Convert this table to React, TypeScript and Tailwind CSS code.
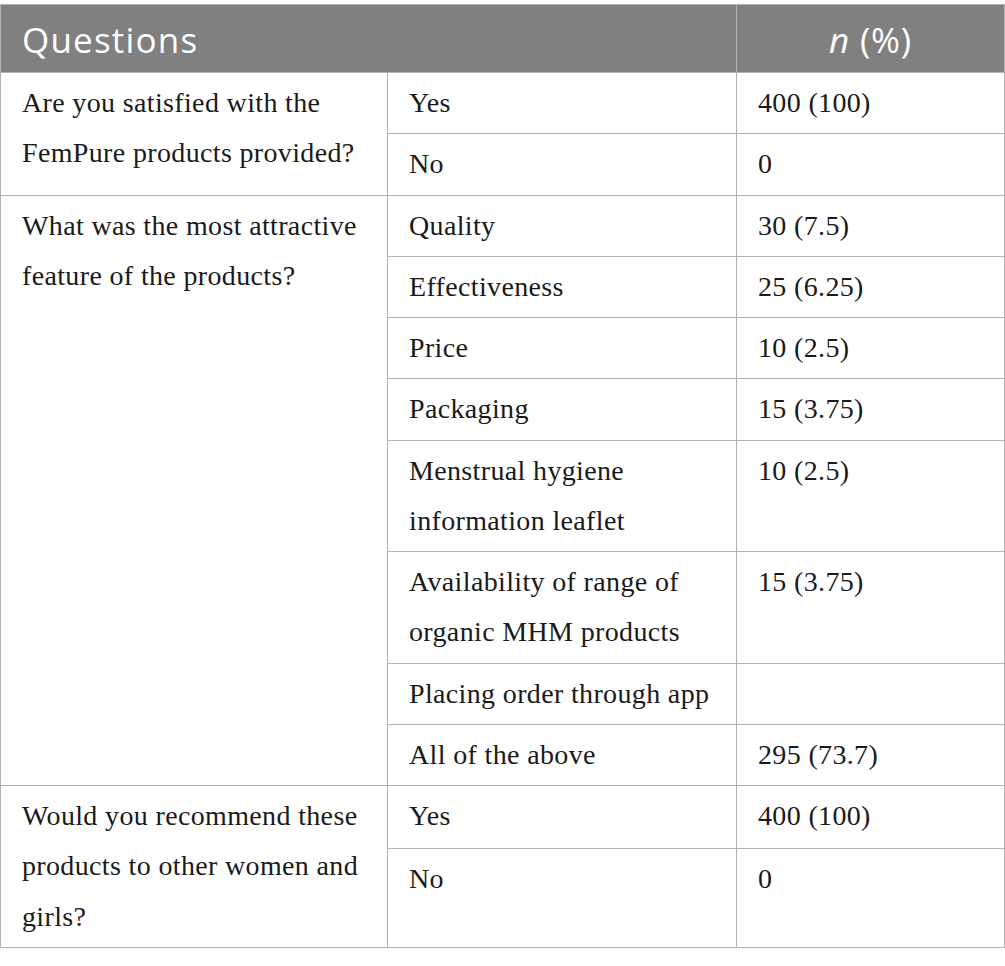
import React from "react";

type Option = { label: string[]; value: string; tall?: boolean };
type Group = { question: string[]; options: Option[] };

const groups: Group[] = [
  {
    question: ["Are you satisfied with the", "FemPure products provided?"],
    options: [
      { label: ["Yes"], value: "400 (100)" },
      { label: ["No"], value: "0" },
    ],
  },
  {
    question: ["What was the most attractive", "feature of the products?"],
    options: [
      { label: ["Quality"], value: "30 (7.5)" },
      { label: ["Effectiveness"], value: "25 (6.25)" },
      { label: ["Price"], value: "10 (2.5)" },
      { label: ["Packaging"], value: "15 (3.75)" },
      { label: ["Menstrual hygiene", "information leaflet"], value: "10 (2.5)" },
      { label: ["Availability of range of", "organic MHM products"], value: "15 (3.75)" },
      { label: ["Placing order through app"], value: "" },
      { label: ["All of the above"], value: "295 (73.7)" },
    ],
  },
  {
    question: ["Would you recommend these", "products to other women and", "girls?"],
    options: [
      { label: ["Yes"], value: "400 (100)" },
      // the question cell runs three lines, so the last row takes the slack
      { label: ["No"], value: "0", tall: true },
    ],
  },
];

const cell = "border border-[#b3b3b3] align-top px-[21px] py-[5px] whitespace-nowrap";

function Lines({ lines }: { lines: string[] }) {
  return (
    <>
      {lines.map((l, i) => (
        <div key={i}>{l}</div>
      ))}
    </>
  );
}

export default function App() {
  return (
    <div className="bg-white pt-[4px]">
      <table
        className="w-[1004px] table-fixed border-collapse text-[28px] leading-[50.25px] tracking-[0.35px] text-[#1a1a1a]"
        style={{ fontFamily: '"Liberation Serif", serif' }}
      >
        <colgroup>
          <col className="w-[387px]" />
          <col className="w-[349px]" />
          <col className="w-[268px]" />
        </colgroup>
        <thead>
          <tr className="bg-[#808080] text-white">
            <th
              colSpan={2}
              className="border border-[#b3b3b3] px-[21px] pt-[2px] h-[68px] text-left font-normal text-[35px] leading-[40px] tracking-[1.2px]"
              style={{ fontFamily: '"Open Sans", sans-serif' }}
            >
              Questions
            </th>
            <th
              className="border border-[#b3b3b3] px-[21px] pt-[2px] h-[68px] text-center font-normal text-[35px] leading-[40px] tracking-[0.8px]"
              style={{ fontFamily: '"Open Sans", sans-serif' }}
            >
              <i>n</i> (%)
            </th>
          </tr>
        </thead>
        <tbody>
          {groups.map((g) =>
            g.options.map((o, i) => (
              <tr key={g.question[0] + o.label[0]} className={o.tall ? "h-[99px]" : ""}>
                {i === 0 ? (
                  <td rowSpan={g.options.length} className={cell}>
                    <Lines lines={g.question} />
                  </td>
                ) : null}
                <td className={cell}>
                  <Lines lines={o.label} />
                </td>
                <td className={cell}>{o.value}</td>
              </tr>
            )),
          )}
        </tbody>
      </table>
    </div>
  );
}
